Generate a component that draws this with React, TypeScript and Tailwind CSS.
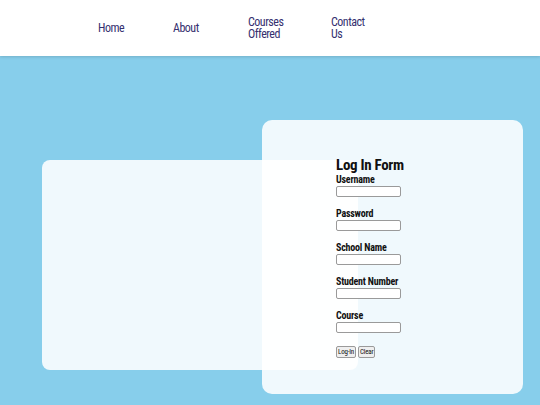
const font = { fontFamily: "'Roboto Condensed', 'Liberation Sans', sans-serif" };

const navItems = ["Home", "About", "Courses Offered", "Contact Us"];

const fields = ["Username", "Password", "School Name", "Student Number", "Course"];

function Header() {
  return (
    <header className="relative z-10 flex h-[56px] items-center bg-white pl-[98px] shadow-[0_1px_3px_rgba(0,0,0,0.15)]">
      <nav className="grid grid-cols-[75px_75px_83px_60px] items-center">
        {navItems.map((item) => (
          <a
            key={item}
            href="#"
            className="w-min text-[12px] leading-[12px] tracking-[-0.5px] text-[#35306f]"
          >
            {item}
          </a>
        ))}
      </nav>
    </header>
  );
}

function LoginForm() {
  return (
    <form className="flex flex-col items-start text-[#111]" onSubmit={(e) => e.preventDefault()}>
      <h1 className="mb-[2px] text-[15px] font-bold leading-[16px] tracking-[-0.3px]">Log In Form</h1>
      {fields.map((field) => (
        <div key={field} className="mb-[12px] flex flex-col">
          <label className="h-[10px] text-[10px] font-bold leading-[10px] tracking-[-0.2px]">
            {field}
          </label>
          <input
            type="text"
            className="mt-px h-[11px] w-[65px] rounded-[2px] border border-[#9a9a9a] bg-white"
          />
        </div>
      ))}
      <div className="mt-px flex gap-[2px]">
        <button
          type="submit"
          className="h-[12px] rounded-[2px] border border-[#9a9a9a] bg-[#efefef] px-px text-[7px] leading-[10px] tracking-[-0.2px]"
        >
          Log-In
        </button>
        <button
          type="reset"
          className="h-[12px] rounded-[2px] border border-[#9a9a9a] bg-[#efefef] px-px text-[7px] leading-[10px] tracking-[-0.2px]"
        >
          Clear
        </button>
      </div>
    </form>
  );
}

export default function App() {
  return (
    <div style={font} className="h-[405px] w-[540px] overflow-hidden bg-[#87ceeb]">
      <Header />
      <main className="grid grid-cols-1 grid-rows-1">
        <div className="col-start-1 row-start-1 ml-[42px] mt-[104px] h-[210px] w-[316px] rounded-[8px] bg-white/[0.88]" />
        <div className="col-start-1 row-start-1 ml-[262px] mt-[64px] h-[274px] w-[261px] rounded-[10px] bg-white/[0.88] pl-[74px] pt-[37px]">
          <LoginForm />
        </div>
      </main>
    </div>
  );
}
